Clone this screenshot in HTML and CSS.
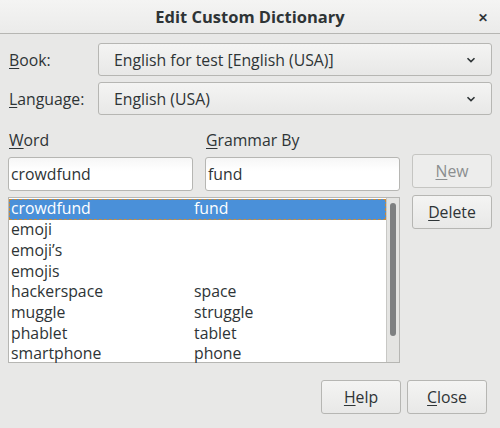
FILE: index.html
```html
<!DOCTYPE html>
<html lang="en">
<head>
  <meta charset="UTF-8">
  <title>Edit Custom Dictionary</title>
  <link rel="stylesheet" href="styles.css">
</head>
<body>
  <div class="dialog">
    <header class="titlebar">
      <span class="title">Edit Custom Dictionary</span>
      <span class="close-x">&#x2715;</span>
    </header>
    <div class="content">
      <div class="field-row">
        <label class="field-label"><u>B</u>ook:</label>
        <div class="combo">
          <span>English for test [English (USA)]</span>
          <svg class="chev" width="10" height="6" viewBox="0 0 10 6"><path d="M1.5 1.2 L5 4.6 L8.5 1.2" fill="none" stroke="#2e3436" stroke-width="1.6"/></svg>
        </div>
      </div>
      <div class="field-row">
        <label class="field-label"><u>L</u>anguage:</label>
        <div class="combo">
          <span>English (USA)</span>
          <svg class="chev" width="10" height="6" viewBox="0 0 10 6"><path d="M1.5 1.2 L5 4.6 L8.5 1.2" fill="none" stroke="#2e3436" stroke-width="1.6"/></svg>
        </div>
      </div>

      <div class="edit-area">
        <div class="left-col">
          <div class="entry-grid">
            <div class="entry-group word-group">
              <label class="col-label"><u>W</u>ord</label>
              <div class="entry">crowdfund</div>
            </div>
            <div class="entry-group grammar-group">
              <label class="col-label"><u>G</u>rammar By</label>
              <div class="entry">fund</div>
            </div>
          </div>
          <div class="list">
            <div class="rows">
              <div class="row selected"><span class="c1">crowdfund</span><span class="c2">fund</span></div>
              <div class="row"><span class="c1">emoji</span><span class="c2"></span></div>
              <div class="row"><span class="c1">emoji’s</span><span class="c2"></span></div>
              <div class="row"><span class="c1">emojis</span><span class="c2"></span></div>
              <div class="row"><span class="c1">hackerspace</span><span class="c2">space</span></div>
              <div class="row"><span class="c1">muggle</span><span class="c2">struggle</span></div>
              <div class="row"><span class="c1">phablet</span><span class="c2">tablet</span></div>
              <div class="row"><span class="c1">smartphone</span><span class="c2">phone</span></div>
            </div>
            <div class="scrollbar"><div class="thumb"></div></div>
          </div>
        </div>
        <div class="side-buttons">
          <button class="btn disabled"><u>N</u>ew</button>
          <button class="btn"><u>D</u>elete</button>
        </div>
      </div>

      <div class="footer">
        <button class="btn"><u>H</u>elp</button>
        <button class="btn"><u>C</u>lose</button>
      </div>
    </div>
  </div>
</body>
</html>
```

FILE: styles.css
```css
body {
  margin: 0;
  font-family: 'Open Sans', 'Noto Sans', sans-serif;
  font-size: 15.8px;
  color: #2e3436;
  background: #e8e8e7;
}
u {
  text-decoration: underline;
  text-underline-offset: 2px;
}
.dialog {
  width: 500px;
  height: 428px;
  background: #e8e8e7;
  overflow: hidden;
}
.titlebar {
  height: 33px;
  border-bottom: 1px solid #b6b6b3;
  background: linear-gradient(#f4f4f3, #ebebea);
  display: flex;
  align-items: center;
  justify-content: center;
  position: relative;
}
.title {
  font-weight: bold;
  font-size: 16.5px;
  color: #2e3436;
}
.close-x {
  position: absolute;
  right: 12px;
  top: 9px;
  font-size: 12px;
  font-weight: bold;
  color: #2e3436;
}
.content {
  padding: 9px 8px 0 8px;
}
.field-row {
  display: flex;
  align-items: center;
  margin-bottom: 6px;
}
.field-label {
  width: 89px;
  padding-left: 1px;
}
.combo {
  flex: 1;
  height: 33px;
  box-sizing: border-box;
  border: 1px solid #b6b6b3;
  border-radius: 3px;
  background: linear-gradient(#f4f4f3, #e8e8e7);
  display: flex;
  align-items: center;
  justify-content: space-between;
  padding: 0 15px 0 15px;
}
.edit-area {
  display: flex;
  margin-top: 12px;
}
.left-col {
  width: 392px;
}
.entry-grid {
  display: flex;
  gap: 12px;
}
.entry-group {
  display: flex;
  flex-direction: column;
}
.word-group { width: 185px; }
.grammar-group { width: 195px; }
.col-label {
  height: 30px;
  line-height: 26px;
  padding-left: 1px;
}
.entry {
  height: 34px;
  box-sizing: border-box;
  border: 1px solid #b6b6b3;
  border-radius: 3px;
  background: linear-gradient(#f6f6f6, #ffffff 40%);
  display: flex;
  align-items: center;
  padding-left: 2px;
}
.list {
  margin-top: 6px;
  height: 166px;
  box-sizing: border-box;
  border: 1px solid #b6b6b3;
  background: #fff;
  display: flex;
}
.rows {
  flex: 1;
  padding-top: 1px;
}
.row {
  display: flex;
  height: 20.7px;
  align-items: center;
  line-height: 1;
}
.row.selected {
  background: #4a90d9;
  color: #fff;
  outline: 1px dashed #c88a3a;
  outline-offset: -1px;
}
.c1 {
  width: 183px;
  padding-left: 2px;
}
.c2 {
  flex: 1;
}
.scrollbar {
  width: 13px;
  border-left: 1px solid #c8c8c5;
  background: #e4e4e2;
  box-sizing: border-box;
  padding: 5px 3px 0 3px;
}
.thumb {
  height: 133px;
  background: #7e8081;
  border-radius: 3px;
}
.side-buttons {
  display: flex;
  flex-direction: column;
  gap: 7px;
  margin-left: 12px;
  padding-top: 27px;
}
.btn {
  width: 80px;
  height: 34px;
  box-sizing: border-box;
  font-family: inherit;
  font-size: 15.8px;
  color: #2e3436;
  border: 1px solid #b6b6b3;
  border-radius: 3px;
  background: linear-gradient(#f4f4f3, #e8e8e7);
  padding: 0;
}
.btn.disabled {
  color: #8b8e8f;
  background: #ededec;
  border-color: #c5c5c2;
}
.footer {
  display: flex;
  justify-content: flex-end;
  gap: 6px;
  margin-top: 17px;
  padding-right: 5px;
}
```
